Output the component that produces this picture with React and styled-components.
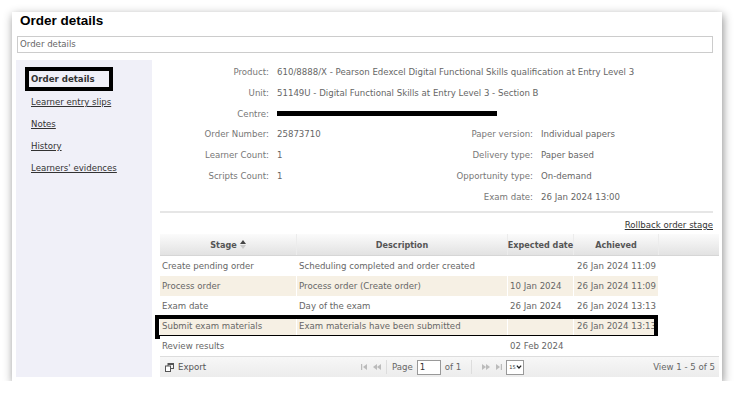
import React from 'react';
import styled, { createGlobalStyle } from 'styled-components';

const GlobalStyle = createGlobalStyle`
  body {
    margin: 0;
    background: #ffffff;
    font-family: "DejaVu Sans", Verdana, sans-serif;
    font-size: 8.6px;
    color: #666666;
  }
`;

const Card = styled.div`
  margin: 12px 0 0 12px;
  width: 710px;
  height: 369px;
  background: #ffffff;
  box-shadow: 1px 3px 9px rgba(0, 0, 0, 0.45);
  box-sizing: border-box;
  padding-top: 1px;
`;

const Title = styled.h1`
  margin: 0 0 0 8px;
  height: 23px;
  line-height: 16px;
  font-family: "Liberation Sans", Arial, sans-serif;
  font-size: 13.5px;
  font-weight: bold;
  color: #000000;
`;

const Breadcrumb = styled.div`
  margin: 0 9px 0 5px;
  height: 17px;
  border: 1px solid #cccccc;
  box-sizing: border-box;
  padding-left: 2px;
  line-height: 15px;
  color: #666666;
`;

const Body = styled.div`
  display: flex;
  gap: 8px;
  margin: 7px 0 0 4px;
`;

const Sidebar = styled.nav`
  flex: 0 0 136px;
  height: 317px;
  background: #f0f0f8;
  box-sizing: border-box;
  padding: 7px 0 0 9px;
  display: flex;
  flex-direction: column;
  align-items: flex-start;
`;

const SideLink = styled.a`
  display: block;
  line-height: 14px;
  padding: ${({ selected }) => (selected ? '1px 14px 1px 2px' : '0 2px')};
  border: 4px solid ${({ selected }) => (selected ? '#000000' : 'transparent')};
  color: #333333;
  font-weight: ${({ selected }) => (selected ? 'bold' : 'normal')};
  text-decoration: ${({ selected }) => (selected ? 'none' : 'underline')};
  cursor: pointer;
`;

const Main = styled.div`
  flex: 0 0 559px;
  display: flex;
  flex-direction: column;
`;

const Details = styled.div`
  width: 553px;
  display: grid;
  grid-template-columns: 109px 150px 98px 1fr;
  grid-auto-rows: 20.8px;
  column-gap: 8px;
  align-items: center;
  padding-top: 1.6px;
`;

const Label = styled.div`
  text-align: right;
  color: #777777;
  white-space: nowrap;
`;

const Value = styled.div`
  grid-column: ${({ span }) => (span ? '2 / 5' : 'auto')};
  white-space: nowrap;
  color: #666666;
`;

const Redacted = styled.span`
  display: inline-block;
  width: 220px;
  height: 5px;
  background: #000000;
  vertical-align: 1px;
`;

const Separator = styled.div`
  width: 553px;
  height: 2px;
  background: #e6e6e6;
  margin-top: 4px;
`;

const ActionRow = styled.div`
  width: 553px;
  height: 21px;
  display: flex;
  justify-content: flex-end;
  align-items: center;
  padding-top: 2px;
  box-sizing: border-box;
`;

const ActionLink = styled.a`
  color: #333333;
  text-decoration: underline;
  cursor: pointer;
`;

const Grid = styled.div`
  width: 559px;
  display: flex;
  flex-direction: column;
`;

const HeaderRow = styled.div`
  display: grid;
  grid-template-columns: 137px 211px 66px 85px 60px;
  height: 22px;
  background: linear-gradient(#fbfbfb, #e2e2e2);
  border-bottom: 1px solid #d6d6d6;
  box-sizing: border-box;
`;

const HeadCell = styled.div`
  display: flex;
  align-items: center;
  justify-content: center;
  gap: 3px;
  font-weight: bold;
  font-size: 8.1px;
  white-space: nowrap;
  color: #555555;
  border-right: 1px solid ${({ last }) => (last ? 'transparent' : '#ececec')};
`;

const Row = styled.div`
  position: relative;
  display: grid;
  grid-template-columns: 137px 211px 66px 85px;
  width: 499px;
  height: 20px;
  background: ${({ alt }) => (alt ? '#f6f0e4' : '#ffffff')};
  &::after {
    content: '';
    display: ${({ marked }) => (marked ? 'block' : 'none')};
    position: absolute;
    left: -5px;
    right: 1px;
    top: -1px;
    bottom: -3px;
    border: 4px solid #000000;
  }
`;

const Cell = styled.div`
  display: flex;
  align-items: center;
  padding-left: ${({ pad }) => pad || 2}px;
  white-space: nowrap;
  color: #666666;
  border-right: 1px solid #ffffff;
`;

const Footer = styled.div`
  display: flex;
  align-items: center;
  height: 21px;
  background: linear-gradient(#f7f7f7, #ececec);
  border-top: 1px solid #dddddd;
  box-sizing: border-box;
  padding: 0 4px 0 5px;
`;

const ExportButton = styled.div`
  flex: 0 0 193px;
  display: flex;
  align-items: center;
  gap: 4px;
  color: #555555;
`;

const Pager = styled.div`
  display: flex;
  align-items: center;
  gap: 4px;
  margin-left: 3px;
  color: #666666;
`;

const PagerSep = styled.span`
  width: 1px;
  height: 14px;
  margin: 0 ${({ wide }) => (wide ? '6px' : '1px')};
  background: #dddddd;
`;

const PageInput = styled.div`
  width: 20px;
  height: 13px;
  border: 1px solid #999999;
  background: #ffffff;
  line-height: 13px;
  padding-left: 2px;
  color: #333333;
`;

const PageSelect = styled.div`
  display: flex;
  align-items: center;
  justify-content: space-between;
  width: 13px;
  height: 13px;
  border: 1px solid #999999;
  background: #ffffff;
  padding: 0 1px 0 2px;
  font-size: 5px;
  color: #333333;
`;

const ViewCount = styled.div`
  margin-left: auto;
  color: #666666;
`;

const SortIcon = () => (
  <svg width="6" height="9" viewBox="0 0 6 9">
    <path d="M0 4 L3 0 L6 4 Z" fill="#444" />
    <path d="M0 5 L3 9 L6 5 Z" fill="#c8c8c8" />
  </svg>
);

const ExportIcon = () => (
  <svg width="9" height="9" viewBox="0 0 9 9">
    <rect x="3" y="0.5" width="5.5" height="5" fill="none" stroke="#555" />
    <rect x="3" y="0.5" width="5.5" height="1.5" fill="#555" />
    <rect x="0.5" y="3" width="5" height="5.5" fill="#fff" stroke="#555" />
  </svg>
);

const NavIcon = ({ dir, edge }) => (
  <svg width="8" height="6" viewBox="0 0 8 6" style={{ transform: dir === 'right' ? 'scaleX(-1)' : 'none' }}>
    {edge ? (
      <>
        <rect x="0" y="0" width="1.2" height="6" fill="#bbb" />
        <path d="M2 3 L6 0 L6 6 Z" fill="#bbb" />
      </>
    ) : (
      <>
        <path d="M0 3 L4 0 L4 6 Z" fill="#bbb" />
        <path d="M4 3 L8 0 L8 6 Z" fill="#bbb" />
      </>
    )}
  </svg>
);

const ChevronDown = () => (
  <svg width="6" height="4" viewBox="0 0 7 5">
    <path d="M0.8 0.8 L3.5 3.8 L6.2 0.8" fill="none" stroke="#222" strokeWidth="1.6" />
  </svg>
);

const stages = [
  { stage: 'Create pending order', desc: 'Scheduling completed and order created', expected: '', achieved: '26 Jan 2024 11:09' },
  { stage: 'Process order', desc: 'Process order (Create order)', expected: '10 Jan 2024', achieved: '26 Jan 2024 11:09' },
  { stage: 'Exam date', desc: 'Day of the exam', expected: '26 Jan 2024', achieved: '26 Jan 2024 13:13' },
  { stage: 'Submit exam materials', desc: 'Exam materials have been submitted', expected: '', achieved: '26 Jan 2024 13:13', marked: true },
  { stage: 'Review results', desc: '', expected: '02 Feb 2024', achieved: '' },
];

const App = () => (
  <>
    <GlobalStyle />
    <Card>
      <Title>Order details</Title>
      <Breadcrumb>Order details</Breadcrumb>
      <Body>
        <Sidebar>
          <SideLink selected>Order details</SideLink>
          <SideLink>Learner entry slips</SideLink>
          <SideLink>Notes</SideLink>
          <SideLink>History</SideLink>
          <SideLink>Learners' evidences</SideLink>
        </Sidebar>
        <Main>
          <Details>
            <Label>Product:</Label>
            <Value span>610/8888/X - Pearson Edexcel Digital Functional Skills qualification at Entry Level 3</Value>
            <Label>Unit:</Label>
            <Value span>51149U - Digital Functional Skills at Entry Level 3 - Section B</Value>
            <Label>Centre:</Label>
            <Value span><Redacted /></Value>
            <Label>Order Number:</Label>
            <Value>25873710</Value>
            <Label>Paper version:</Label>
            <Value>Individual papers</Value>
            <Label>Learner Count:</Label>
            <Value>1</Value>
            <Label>Delivery type:</Label>
            <Value>Paper based</Value>
            <Label>Scripts Count:</Label>
            <Value>1</Value>
            <Label>Opportunity type:</Label>
            <Value>On-demand</Value>
            <div />
            <div />
            <Label>Exam date:</Label>
            <Value>26 Jan 2024 13:00</Value>
          </Details>
          <Separator />
          <ActionRow>
            <ActionLink>Rollback order stage</ActionLink>
          </ActionRow>
          <Grid>
            <HeaderRow>
              <HeadCell>Stage <SortIcon /></HeadCell>
              <HeadCell>Description</HeadCell>
              <HeadCell>Expected date</HeadCell>
              <HeadCell>Achieved</HeadCell>
              <HeadCell last />
            </HeaderRow>
            {stages.map((s, i) => (
              <Row key={i} alt={i % 2 === 1} marked={s.marked}>
                <Cell>{s.stage}</Cell>
                <Cell>{s.desc}</Cell>
                <Cell>{s.expected}</Cell>
                <Cell pad={3}>{s.achieved}</Cell>
              </Row>
            ))}
            <Footer>
              <ExportButton><ExportIcon />Export</ExportButton>
              <Pager>
                <NavIcon edge />
                <NavIcon />
                <PagerSep />
                <span>Page</span>
                <PageInput>1</PageInput>
                <span>of 1</span>
                <PagerSep wide />
                <NavIcon dir="right" />
                <NavIcon dir="right" edge />
                <PageSelect>15 <ChevronDown /></PageSelect>
              </Pager>
              <ViewCount>View 1 - 5 of 5</ViewCount>
            </Footer>
          </Grid>
        </Main>
      </Body>
    </Card>
  </>
);

export default App;
